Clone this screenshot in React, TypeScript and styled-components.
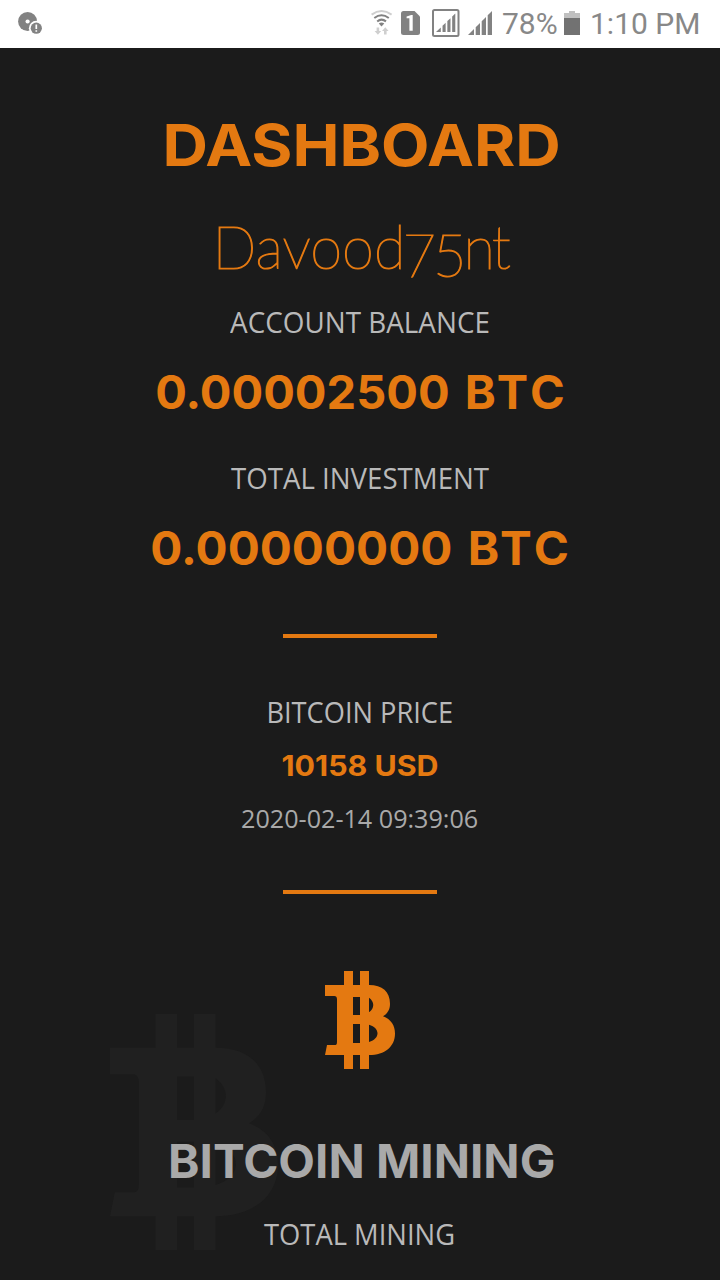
import React from "react";
import styled, { createGlobalStyle } from "styled-components";

const orange = "#e47911";
const grey = "#828282";

const GlobalStyle = createGlobalStyle`
  body { margin: 0; background: #1b1b1b; }
  * { box-sizing: border-box; }
`;

const Screen = styled.div`
  width: 720px;
  height: 1280px;
  overflow: hidden;
  background: #1b1b1b;
  display: flex;
  flex-direction: column;
`;

const StatusBar = styled.header`
  flex: none;
  height: 48px;
  padding: 0 20px 0 18px;
  background: #fff;
  display: flex;
  justify-content: space-between;
`;

const StatusGroup = styled.div`
  display: flex;
`;

const Glyph = styled.svg<{ $gap?: number }>`
  display: block;
  flex: none;
  height: 48px;
  margin-right: ${(p) => p.$gap ?? 0}px;
`;

const StatusText = styled.span<{ $width: number; $gap?: number }>`
  width: ${(p) => p.$width}px;
  margin-right: ${(p) => p.$gap ?? 0}px;
  font: 400 30px/48px Roboto, sans-serif;
  color: #888;
  white-space: nowrap;
`;

const Main = styled.main`
  flex: 1;
  display: flex;
  flex-direction: column;
  align-items: center;
  padding-top: 57px;
`;

const Line = styled.div<{ $top?: number; $scale?: number; $shift?: number }>`
  flex: none;
  margin-top: ${(p) => p.$top ?? 0}px;
  white-space: nowrap;
  transform: translateX(${(p) => p.$shift ?? 0}px) scaleX(${(p) => p.$scale ?? 1});
`;

const Title = styled(Line)`
  font: 700 58px/80px Inter, sans-serif;
  color: ${orange};
`;

const UserName = styled(Line)`
  font: 100 59px/80px Lato, sans-serif;
  color: ${orange};
  -webkit-text-stroke: 1.2px ${orange};
`;

const LowDigits = styled.span`
  position: relative;
  top: 8px;
  margin-left: -3px;
  letter-spacing: -3px;
`;

const TightTail = styled.span`
  letter-spacing: -3px;
`;

const Label = styled(Line)`
  font: 400 28.5px/40px "Open Sans", sans-serif;
  color: #b9b9b9;
`;

const Amount = styled(Line)`
  font: 700 47px/60px Inter, sans-serif;
  color: ${orange};
`;

const Unit = styled.span`
  margin: 0 -3.5px 0 4px;
  letter-spacing: 3.5px;
`;

const Price = styled(Line)`
  font: 700 29px/40px Inter, sans-serif;
  color: ${orange};
`;

const Stamp = styled(Line)`
  font: 400 26px/40px "Open Sans", sans-serif;
  color: #a9a9a9;
`;

const Divider = styled.hr<{ $top: number }>`
  flex: none;
  width: 154px;
  height: 4px;
  margin: ${(p) => p.$top}px 0 0;
  border: 0;
  background: ${orange};
`;

const Mining = styled.section`
  position: relative;
  width: 100%;
  margin-top: 77px;
  display: flex;
  flex-direction: column;
  align-items: center;
`;

const Coin = styled.svg`
  display: block;
  width: 70px;
  height: 98px;
  fill: ${orange};
`;

const GhostCoin = styled(Coin)`
  position: absolute;
  left: 110px;
  top: 43px;
  width: 168px;
  height: 236px;
  fill: #202020;
`;

const Heading = styled(Line)`
  font: 700 47px/60px Inter, sans-serif;
  color: #a9a9a9;
`;

const coinPath =
  "M0 42H57V0H84V42H105V0H132V42C172 42 195 62 195 98C195 116 187 128 174 136C198 145 210 164 210 188C210 226 180 252 132 252V294H105V252H84V294H57V252H0L6 222H28C34 222 36 220 36 212V85C36 78 33 75 28 75H0ZM84 78V132H105V78ZM84 159V216H105V159ZM132 80V124C149 112 149 92 132 80ZM132 161V213C166 204 166 170 132 161Z";

const Bars = ({ x, y, w, h }: { x: number; y: number; w: number; h: number }) => (
  <g fill={grey}>
    {[0, 1, 2, 3].map((i) => {
      const step = w / 4;
      const left = x + i * step + (i ? 1.7 : 0);
      const right = x + (i + 1) * step;
      const slope = h / w;
      return (
        <path
          key={i}
          d={`M${left} ${y + h}V${y + h - (left - x) * slope}L${right} ${y + h - (right - x) * slope}V${y + h}Z`}
        />
      );
    })}
  </g>
);

export default function App() {
  return (
    <>
      <GlobalStyle />
      <Screen>
        <StatusBar>
          <Glyph width="26" viewBox="18 0 26 48">
            <circle cx="27.6" cy="21.5" r="9.5" fill={grey} />
            <circle cx="27.6" cy="21.5" r="2.1" fill="#fff" />
            <circle cx="36.3" cy="28.2" r="7.4" fill="#fff" />
            <circle cx="36.3" cy="28.2" r="5.6" fill={grey} />
            <path d="M36.3 24.6V29M36.3 30.2V31.8" stroke="#fff" strokeWidth="1.7" />
          </Glyph>
          <StatusGroup>
            <Glyph width="22" $gap={8} viewBox="371 0 22 48">
              <g fill="none" strokeWidth="2">
                <path d="M371.6 14.6Q381.5 7.6 391.6 14.6" stroke="#cfcfcf" />
                <path d="M374.3 18Q381.5 12.6 388.8 18" stroke={grey} />
                <path d="M377.2 21.4Q381.5 17.8 386 21.4" stroke={grey} />
              </g>
              <path d="M378.8 23.6Q381.5 21.4 384.3 23.6L381.5 26.6Z" fill={grey} />
              <path d="M376.6 27.5H379.2V31H381.2L377.9 34.8L374.6 31H376.6Z" fill="#cfcfcf" />
              <path d="M384 34.5H386.6V31H388.6L385.3 27.2L382 31H384Z" fill="#cfcfcf" />
            </Glyph>
            <Glyph width="19" $gap={12} viewBox="401 0 19 48">
              <path d="M403.5 11H414.5L420 16.5V32.5Q420 35 417.5 35H403.5Q401 35 401 32.5V13.5Q401 11 403.5 11Z" fill={grey} />
              <path d="M406.6 18.2V16.4L411.2 15H412.7V30.7H409.4V18.2Z" fill="#fff" />
            </Glyph>
            <Glyph width="28" $gap={8} viewBox="432 0 28 48">
              <rect x="433" y="10" width="25.5" height="26" rx="1.5" fill="none" stroke={grey} strokeWidth="2" />
              <Bars x={436} y={13.5} w={19.3} h={18.5} />
            </Glyph>
            <Glyph width="24" $gap={10} viewBox="468 0 24 48">
              <Bars x={468} y={11} w={24} h={24} />
            </Glyph>
            <StatusText $width={56} $gap={6}>78%</StatusText>
            <Glyph width="16" $gap={10} viewBox="564 0 16 48">
              <path d="M569 11H575V13H580V18H564V13H569Z" fill="#c0c0c0" />
              <path d="M564 18H580V35H564Z" fill="#727272" />
            </Glyph>
            <StatusText $width={110}>1:10 PM</StatusText>
          </StatusGroup>
        </StatusBar>
        <Main>
          <Title $scale={1.085} $shift={2}>DASHBOARD</Title>
          <UserName $top={22} $scale={0.98} $shift={0.5}>
            Davood<LowDigits>75</LowDigits><TightTail>nt</TightTail>
          </UserName>
          <Label $top={15} $scale={0.977}>ACCOUNT BALANCE</Label>
          <Amount $top={20}>
            0.00002500 <Unit>BTC</Unit>
          </Amount>
          <Label $top={36} $scale={0.97}>TOTAL INVESTMENT</Label>
          <Amount $top={20} $scale={1.013}>
            0.00000000 <Unit>BTC</Unit>
          </Amount>
          <Divider $top={56} />
          <Label $top={54} $scale={0.955}>BITCOIN PRICE</Label>
          <Price $top={14} $scale={1.047}>10158 USD</Price>
          <Stamp $top={12} $scale={0.967}>2020-02-14 09:39:06</Stamp>
          <Divider $top={52} />
          <Mining>
            <GhostCoin viewBox="0 0 210 294" preserveAspectRatio="none">
              <path fillRule="evenodd" d={coinPath} />
            </GhostCoin>
            <Coin viewBox="0 0 210 294">
              <path fillRule="evenodd" d={coinPath} />
            </Coin>
            <Heading $top={62} $scale={1.013} $shift={1.5}>BITCOIN MINING</Heading>
            <Label $top={23} $scale={0.96}>TOTAL MINING</Label>
          </Mining>
        </Main>
      </Screen>
    </>
  );
}
